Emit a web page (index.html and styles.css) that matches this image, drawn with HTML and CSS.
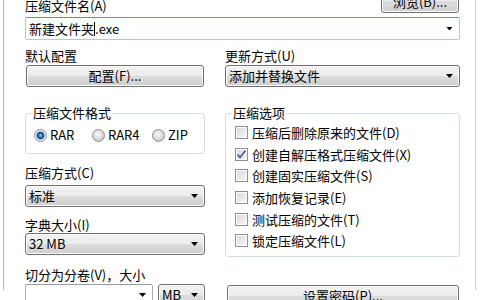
FILE: index.html
```html
<!DOCTYPE html>
<html lang="zh-CN">
<head>
    <meta charset="UTF-8">
    <meta name="viewport" content="width=device-width, initial-scale=1.0">
    <title>压缩文件名和参数</title>
    <link rel="stylesheet" href="styles.css">
</head>
<body>
    <div class="page">
        <!-- Nom de l'archive -->
        <div class="top-row">
            <label class="label top-label">压缩文件名(A)</label>
            <button class="win-button browse">浏览(B)...</button>
        </div>
        <div class="combo edit focused">
            <span class="combo-text">新建文件夹<span class="caret"></span>.exe</span>
            <span class="arrow"></span>
        </div>

        <div class="columns">
            <!-- Colonne de gauche -->
            <div class="col col-left">
                <div class="label">默认配置</div>
                <button class="win-button profile">配置(F)...</button>

                <fieldset class="group format-group">
                    <legend>压缩文件格式</legend>
                    <div class="radios">
                        <span class="radio-item"><span class="radio checked"></span>RAR</span>
                        <span class="radio-item"><span class="radio"></span>RAR4</span>
                        <span class="radio-item"><span class="radio"></span>ZIP</span>
                    </div>
                </fieldset>

                <div class="label method-label">压缩方式(C)</div>
                <div class="combo method">
                    <span class="combo-text">标准</span>
                    <span class="arrow"></span>
                </div>

                <div class="label dict-label">字典大小(I)</div>
                <div class="combo">
                    <span class="combo-text">32 MB</span>
                    <span class="arrow"></span>
                </div>

                <div class="label split-label">切分为分卷(V)，大小</div>
                <div class="split-row">
                    <div class="combo edit split-size">
                        <span class="combo-text"></span>
                        <span class="arrow"></span>
                    </div>
                    <div class="combo split-unit">
                        <span class="combo-text">MB</span>
                        <span class="arrow"></span>
                    </div>
                </div>
            </div>

            <!-- Colonne de droite -->
            <div class="col col-right">
                <div class="label">更新方式(U)</div>
                <div class="combo update">
                    <span class="combo-text">添加并替换文件</span>
                    <span class="arrow"></span>
                </div>

                <fieldset class="group options-group">
                    <legend>压缩选项</legend>
                    <div class="check-row"><span class="check"></span>压缩后删除原来的文件(D)</div>
                    <div class="check-row"><span class="check checked"><svg width="11" height="11" viewBox="0 0 11 11"><polyline points="1.5,5.5 4,8.5 9.5,1.5" fill="none" stroke="#3b5a9c" stroke-width="1.6"/></svg></span>创建自解压格式压缩文件(X)</div>
                    <div class="check-row"><span class="check"></span>创建固实压缩文件(S)</div>
                    <div class="check-row"><span class="check"></span>添加恢复记录(E)</div>
                    <div class="check-row"><span class="check"></span>测试压缩的文件(T)</div>
                    <div class="check-row"><span class="check"></span>锁定压缩文件(L)</div>
                </fieldset>

                <button class="win-button password">设置密码(P)...</button>
            </div>
        </div>
    </div>
</body>
</html>
```

FILE: styles.css
```css
/* Style du corps */
body {
    margin: 0;
    width: 480px;
    height: 300px;
    overflow: hidden;
    background: #ffffff;
    font-family: "Noto Sans CJK SC", sans-serif;
    font-size: 13px;
    color: #000000;
}

/* Cadre de l'onglet */
.page {
    box-sizing: border-box;
    margin-left: 3px;
    width: 473px;
    height: 300px;
    padding: 0 15px 0 21px;
    border-left: 1px solid #b4b4b4;
    border-right: 1px solid #d0d0d0;
}

/* Libellés */
.label {
    display: block;
    height: 16px;
    line-height: 16px;
    white-space: nowrap;
}

/* Ligne du haut */
.top-row {
    display: flex;
    justify-content: space-between;
    align-items: flex-start;
    height: 23px;
    margin-top: -10px;
}

.top-label {
    margin-top: 8px;
}

/* Boutons façon Windows 7 */
.win-button {
    box-sizing: border-box;
    height: 22px;
    padding: 0;
    font-family: inherit;
    font-size: 13px;
    line-height: 18px;
    color: #000000;
    border: 1px solid #707070;
    border-radius: 3px;
    background: linear-gradient(#f2f2f2 0%, #ebebeb 50%, #dddddd 50%, #cfcfcf 100%);
    box-shadow: inset 0 0 0 1px #fbfbfb;
}

.browse {
    width: 78px;
    height: 23px;
    margin-right: 1px;
}

.profile {
    display: block;
    width: 178px;
    margin: 1px 0 0 1px;
}

.password {
    display: block;
    width: 232px;
    margin: 28px 0 0 2px;
}

/* Listes déroulantes */
.combo {
    box-sizing: border-box;
    height: 22px;
    display: flex;
    align-items: center;
    justify-content: space-between;
    padding: 0 6px 0 3px;
    border: 1px solid #707070;
    border-radius: 3px;
    background: linear-gradient(#f2f2f2 0%, #ebebeb 50%, #dddddd 50%, #cfcfcf 100%);
    box-shadow: inset 0 0 0 1px #fbfbfb;
}

.combo-text {
    line-height: 16px;
    white-space: nowrap;
}

.arrow {
    width: 7px;
    height: 4px;
    background: #000000;
    clip-path: polygon(0 0, 100% 0, 50% 100%);
}

/* Champ éditable */
.edit {
    background: #ffffff;
    box-shadow: none;
    border-radius: 2px;
    border-color: #abadb3;
    border-top-color: #9a9ca3;
}

.focused {
    height: 23px;
    margin-top: 4px;
    border-color: #a8cbea;
    border-top-color: #5c8fc4;
}

.caret {
    display: inline-block;
    width: 1px;
    height: 14px;
    background: #000000;
    vertical-align: -2px;
}

/* Colonnes */
.columns {
    display: flex;
    gap: 20px;
    margin-top: 8px;
}

.col-left {
    width: 180px;
}

.col-right {
    width: 235px;
}

.update {
    margin-top: 1px;
}

/* Cadres de groupe */
.group {
    margin: 18px 0 0 0;
    min-width: 0;
    border: 1px solid #d5dfe5;
    border-radius: 3px;
}

.group legend {
    padding: 0 1px;
    line-height: 16px;
    height: 16px;
}

.format-group {
    padding: 6px 0 10px 8px;
}

.format-group legend {
    margin-left: -2px;
}

.options-group {
    padding: 1px 0 4px 9px;
}

.options-group legend {
    margin-left: -3px;
}

/* Boutons radio */
.radios {
    display: grid;
    grid-template-columns: 58px 60px auto;
    height: 16px;
}

.radio-item {
    display: flex;
    align-items: center;
    gap: 3px;
    line-height: 16px;
}

.radio {
    box-sizing: border-box;
    width: 13px;
    height: 13px;
    border-radius: 50%;
    border: 1px solid #8e8f8f;
    background: radial-gradient(circle at 45% 40%, #fbfbfb 0, #e6e6e6 3px, #cfcfcf 6px);
}

.radio.checked {
    background: radial-gradient(circle at 50% 50%, #9fd0f5 0, #2d7cc4 1.6px, #154f8c 3.4px, #dfe5ec 4.4px, #f2f2f2 6px);
}

/* Cases à cocher */
.check-row {
    display: flex;
    align-items: center;
    gap: 4px;
    height: 21.6px;
    white-space: nowrap;
}

.check {
    box-sizing: border-box;
    width: 13px;
    height: 13px;
    display: flex;
    align-items: center;
    justify-content: center;
    border: 1px solid #8f8f8f;
    background: linear-gradient(135deg, #d8d8d8, #f7f7f7);
    box-shadow: inset 0 0 0 1px #ffffff;
}

.check svg {
    display: block;
}

/* Marges de la colonne gauche */
.method-label {
    margin-top: 11px;
}

.method {
    margin-top: 4px;
}

.dict-label {
    margin-top: 10px;
}

.split-label {
    margin-top: 12px;
}

.split-row {
    display: flex;
    gap: 5px;
    margin-top: 1px;
}

.split-size {
    width: 128px;
}

.split-unit {
    width: 47px;
}
```
